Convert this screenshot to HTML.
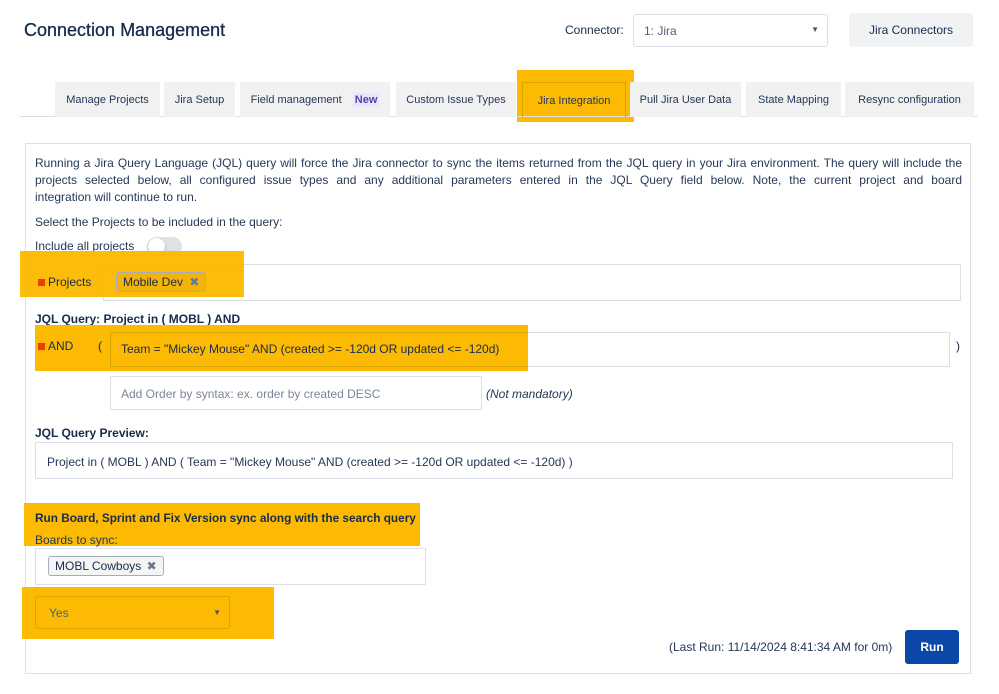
<!DOCTYPE html>
<html><head><meta charset="utf-8"><style>
*{box-sizing:border-box}
body{margin:0;width:999px;height:694px;background:#fff;font-family:"Liberation Sans",sans-serif;color:#172b4d;position:relative;overflow:hidden;font-size:12px}
.a{position:absolute}
.hl{position:absolute;background:#fcba03}
.tab{position:absolute;top:82px;height:35px;background:#f1f1f1;font-size:11px;line-height:36px;text-align:center;color:#253858}
.box{position:absolute;border:1px solid #dcdfe4;background:#fff}
.tag{position:absolute;border:1px solid #a5adba;border-radius:3px;background:rgba(0,0,0,0.04);font-size:12px;line-height:18px;padding:0 6px}
.sq{display:inline-block;width:7px;height:7px;background:#f03c0a;margin-right:3px}
.jl{display:block;text-align:justify;text-align-last:justify;white-space:nowrap}
</style></head><body>
<div class="a" style="left:24px;top:20px;font-size:18px;color:#172b4d;-webkit-text-stroke:0.3px #172b4d">Connection Management</div>
<div class="a" style="left:565px;top:23px;font-size:12px">Connector:</div>
<div class="box" style="left:633px;top:14px;width:195px;height:33px;border-radius:3px;font-size:12px;color:#505f79;padding:9px 10px">1: Jira<span style="position:absolute;right:8px;top:10px;font-size:8px;color:#555">▼</span></div>
<div class="a" style="left:849px;top:13px;width:124px;height:34px;background:#f1f2f4;border-radius:3px;font-size:12px;line-height:34px;text-align:center">Jira Connectors</div>
<div class="hl" style="left:517px;top:70px;width:117px;height:52px"></div>
<div class="a" style="left:20px;top:116px;width:958px;height:1px;background:#dcdfe4"></div>
<div class="tab" style="left:55px;width:105px">Manage Projects</div>
<div class="tab" style="left:164px;width:71px">Jira Setup</div>
<div class="tab" style="left:240px;width:150px">Field management <span style="color:#5243aa;font-weight:bold;margin-left:8px;background:#eae6ff;padding:1px 2px">New</span></div>
<div class="tab" style="left:396px;width:120px">Custom Issue Types</div>
<div class="tab" style="left:522px;width:104px;background:transparent;border:1px solid #d9a400;border-bottom:none">Jira Integration</div>
<div class="tab" style="left:630px;width:111px">Pull Jira User Data</div>
<div class="tab" style="left:746px;width:95px">State Mapping</div>
<div class="tab" style="left:845px;width:129px">Resync configuration</div>
<div class="a" style="left:25px;top:143px;width:946px;height:531px;border:1px solid #dcdfe4"></div>
<div class="a" style="left:35px;top:155px;width:927px;line-height:17px;color:#253858"><span class="jl">Running a Jira Query Language (JQL) query will force the Jira connector to sync the items returned from the JQL query in your Jira environment. The query will include the</span><span class="jl">projects selected below, all configured issue types and any additional parameters entered in the JQL Query field below. Note, the current project and board</span><span style="display:block">integration will continue to run.</span></div>
<div class="a" style="left:35px;top:215px;color:#253858">Select the Projects to be included in the query:</div>
<div class="a" style="left:35px;top:239px;color:#253858">Include all projects</div>
<div class="a" style="left:147px;top:237px;width:35px;height:19px;border-radius:10px;background:#dfe1e6"><div style="position:absolute;left:1px;top:1px;width:17px;height:17px;border-radius:50%;background:#fff;box-shadow:0 1px 2px rgba(0,0,0,.3)"></div></div>
<div class="box" style="left:103px;top:264px;width:858px;height:37px"></div>
<div class="hl" style="left:20px;top:251px;width:224px;height:46px;opacity:.97"></div>
<div class="a" style="left:38px;top:275px;color:#172b4d"><span class="sq"></span>Projects</div>
<div class="tag" style="left:116px;top:272px">Mobile Dev <span style="color:#6b778c;margin-left:3px">✖</span></div>
<div class="a" style="left:35px;top:312px;font-weight:bold">JQL Query: Project in ( MOBL ) AND</div>
<div class="box" style="left:110px;top:332px;width:840px;height:35px"></div>
<div class="hl" style="left:35px;top:325px;width:493px;height:46px"></div>
<div class="box" style="left:110px;top:332px;width:418px;height:35px;background:transparent;border-color:#d9a400;border-right:none"></div>
<div class="a" style="left:38px;top:339px"><span class="sq"></span>AND</div>
<div class="a" style="left:98px;top:339px">(</div>
<div class="a" style="left:121px;top:342px">Team = "Mickey Mouse" AND (created &gt;= -120d OR updated &lt;= -120d)</div>
<div class="a" style="left:956px;top:339px">)</div>
<div class="box" style="left:110px;top:376px;width:372px;height:34px;color:#7a869a;padding:10px 10px">Add Order by syntax: ex. order by created DESC</div>
<div class="a" style="left:486px;top:387px;font-style:italic;color:#253858">(Not mandatory)</div>
<div class="a" style="left:35px;top:426px;font-weight:bold">JQL Query Preview:</div>
<div class="box" style="left:35px;top:442px;width:918px;height:37px;padding:12px 11px;color:#253858">Project in ( MOBL ) AND ( Team = "Mickey Mouse" AND (created &gt;= -120d OR updated &lt;= -120d) )</div>
<div class="hl" style="left:24px;top:503px;width:396px;height:43px"></div>
<div class="a" style="left:35px;top:511px;font-weight:bold;font-size:11.8px">Run Board, Sprint and Fix Version sync along with the search query</div>
<div class="a" style="left:35px;top:533px;color:#253858">Boards to sync:</div>
<div class="box" style="left:35px;top:548px;width:391px;height:37px"></div>
<div class="tag" style="left:48px;top:556px">MOBL Cowboys <span style="color:#6b778c;margin-left:2px">✖</span></div>
<div class="hl" style="left:22px;top:587px;width:252px;height:52px"></div>
<div class="a" style="left:35px;top:596px;width:195px;height:33px;border:1px solid #d9a400;border-radius:3px;padding:9px 13px;color:#505f79">Yes<span style="position:absolute;right:8px;top:11px;font-size:8px;color:#555">▼</span></div>
<div class="a" style="left:669px;top:640px;color:#253858">(Last Run: 11/14/2024 8:41:34 AM for 0m)</div>
<div class="a" style="left:905px;top:630px;width:54px;height:34px;background:#0a47a6;border-radius:3px;color:#fff;font-weight:bold;line-height:34px;text-align:center">Run</div>
</body></html>
